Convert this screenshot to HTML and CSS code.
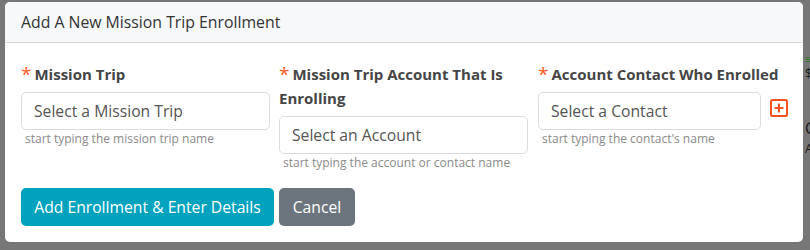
FILE: index.html
```html
<!DOCTYPE html>
<html>
<head>
<meta charset="utf-8">
<link rel="stylesheet" href="styles.css">
</head>
<body>
<div class="backdrop">
  <div class="behind">
    <span class="b-icon">&#8801;</span>
    <span class="b-dollar">$</span>
    <span class="b-c">C</span>
    <span class="b-a">A</span>
  </div>
  <div class="modal">
    <div class="modal-header">Add A New Mission Trip Enrollment</div>
    <div class="modal-body">
      <div class="fields">
        <div class="field">
          <label class="label"><span class="req">*</span>Mission Trip</label>
          <div class="input">Select a Mission Trip</div>
          <div class="help">start typing the mission trip name</div>
        </div>
        <div class="field">
          <label class="label"><span class="req">*</span>Mission Trip Account That Is Enrolling</label>
          <div class="input">Select an Account</div>
          <div class="help">start typing the account or contact name</div>
        </div>
        <div class="field">
          <label class="label"><span class="req">*</span>Account Contact Who Enrolled</label>
          <div class="input-row">
            <div class="input">Select a Contact</div>
            <svg class="add-icon" width="18" height="18" viewBox="0 0 18 18">
              <rect x="1" y="1" width="16" height="16" rx="1.5" fill="none" stroke="#f4511e" stroke-width="2"/>
              <path d="M9 4.5v9M4.5 9h9" stroke="#f4511e" stroke-width="2"/>
            </svg>
          </div>
          <div class="help">start typing the contact's name</div>
        </div>
      </div>
      <div class="actions">
        <button class="btn btn-primary">Add Enrollment &amp; Enter Details</button>
        <button class="btn btn-secondary">Cancel</button>
      </div>
    </div>
  </div>
</div>
</body>
</html>
```

FILE: styles.css
```css
* { box-sizing: border-box; }
html, body {
  margin: 0;
  padding: 0;
  width: 810px;
  height: 250px;
  overflow: hidden;
  background: #777777;
  font-family: "Open Sans", "Noto Sans", sans-serif;
}
.backdrop {
  position: relative;
  width: 810px;
  height: 250px;
  padding: 2px 7px 0 5px;
}
.behind {
  position: absolute;
  left: 805px;
  top: 50px;
  width: 5px;
  height: 120px;
  overflow: hidden;
  color: #1a1a1a;
  font-size: 12px;
  line-height: 12px;
}
.behind span { position: absolute; left: 0; }
.b-icon { top: 3px; color: #2a7a2a; font-size: 11px; line-height: 11px; }
.b-dollar { top: 18px; }
.b-c { top: 70px; font-size: 16px; line-height: 16px; }
.b-a { top: 93px; }
.modal {
  position: relative;
  width: 798px;
  height: 240px;
  background: #fff;
  border-radius: 5px;
  overflow: hidden;
}
.modal-header {
  height: 41px;
  background: #f7f8fa;
  border-bottom: 1px solid #d6d8db;
  padding: 9px 16px 0 16px;
  font-size: 15.8px;
  color: #333;
}
.modal-body {
  padding: 19px 16px 0 16px;
}
.fields {
  display: grid;
  grid-template-columns: 249px 250px 252px;
  column-gap: 9px;
}
.field { display: flex; flex-direction: column; }
.label {
  font-weight: 700;
  font-size: 15px;
  line-height: 24px;
  color: #454545;
  margin-bottom: 6px;
  padding-right: 2px;
  white-space: normal;
}
.req {
  display: inline-block;
  color: #ff5a1f;
  font-size: 19px;
  line-height: 16px;
  margin-right: 3px;
  font-weight: 400;
  vertical-align: -1px;
}
.input {
  height: 38px;
  border: 1px solid #dcdcdc;
  border-radius: 5px;
  padding: 0 12px;
  font-size: 15.7px;
  line-height: 36px;
  color: #555;
  width: 249px;
}
.input-row {
  display: flex;
  align-items: center;
  gap: 9px;
}
.input-row .input { width: 223px; }
.add-icon { flex: none; margin-top: -7px; }
.help {
  font-size: 12px;
  color: #8a8a8a;
  padding-left: 4px;
  margin-top: 0;
}
.actions {
  display: flex;
  gap: 5px;
  margin-top: 17px;
}
.btn {
  height: 38px;
  border: none;
  border-radius: 5px;
  color: #fff;
  font-family: "Open Sans", "Noto Sans", sans-serif;
  font-size: 15.7px;
  padding: 0 10px;
}
.btn-primary { background: #00a2bd; width: 253px; }
.btn-secondary { background: #6c757d; width: 76px; }
```
